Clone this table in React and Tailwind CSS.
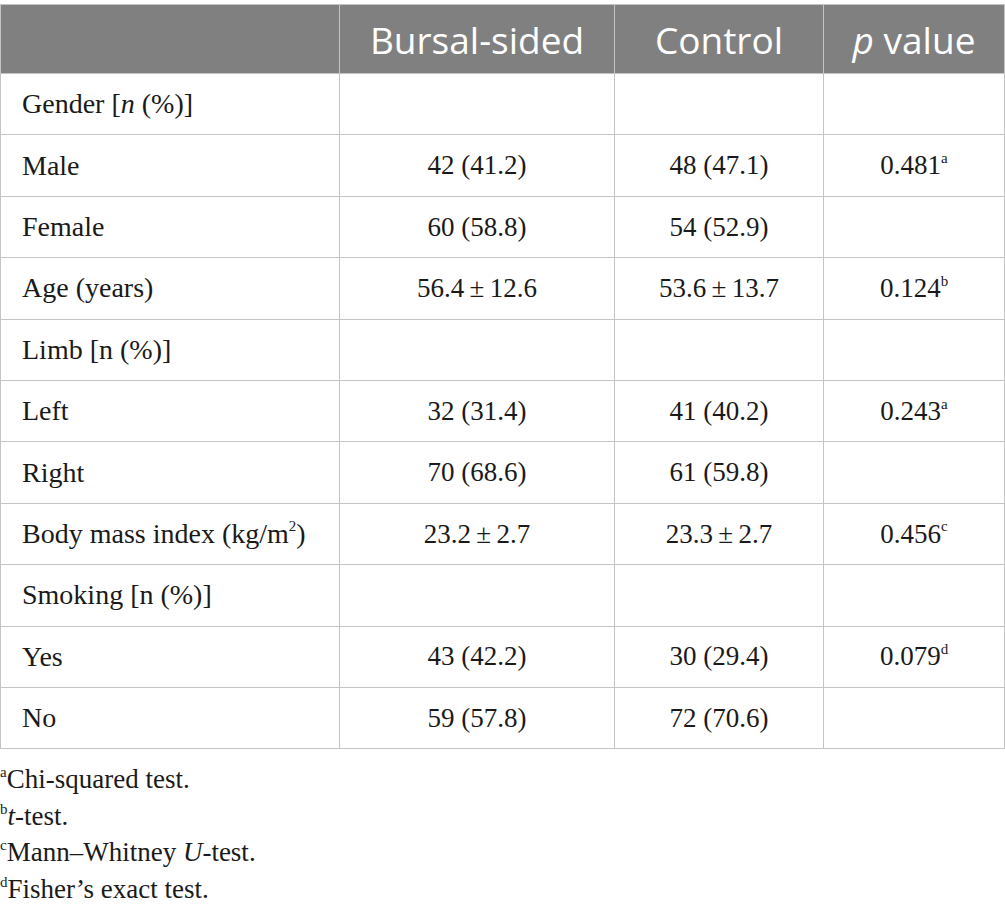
import React from 'react';

const serif = { fontFamily: '"Liberation Serif", "Times New Roman", serif' };

const rows = [
  { label: <>Gender [<i>n</i> (%)]</>, a: '', b: '', p: '' },
  { label: 'Male', a: '42 (41.2)', b: '48 (47.1)', p: '0.481', sup: 'a' },
  { label: 'Female', a: '60 (58.8)', b: '54 (52.9)', p: '' },
  { label: 'Age (years)', a: '56.4\u2009±\u200912.6', b: '53.6\u2009±\u200913.7', p: '0.124', sup: 'b' },
  { label: 'Limb [n (%)]', a: '', b: '', p: '' },
  { label: 'Left', a: '32 (31.4)', b: '41 (40.2)', p: '0.243', sup: 'a' },
  { label: 'Right', a: '70 (68.6)', b: '61 (59.8)', p: '' },
  { label: <>Body mass index (kg/m<sup className="text-[15px] -top-[0.8em]">2</sup>)</>, a: '23.2\u2009±\u20092.7', b: '23.3\u2009±\u20092.7', p: '0.456', sup: 'c' },
  { label: 'Smoking [n (%)]', a: '', b: '', p: '' },
  { label: 'Yes', a: '43 (42.2)', b: '30 (29.4)', p: '0.079', sup: 'd' },
  { label: 'No', a: '59 (57.8)', b: '72 (70.6)', p: '' },
];

const notes = [
  { s: 'a', t: 'Chi-squared test.' },
  { s: 'b', t: <><i>t</i>-test.</> },
  { s: 'c', t: <>Mann–Whitney <i>U</i>-test.</> },
  { s: 'd', t: 'Fisher’s exact test.' },
];

export default function App() {
  return (
    <div className="w-[1005px] bg-white pt-[4px]">
      <table className="border-collapse table-fixed w-[1004px] text-[#1a1a1a]" style={serif}>
        <colgroup>
          <col className="w-[339px]" />
          <col className="w-[275px]" />
          <col className="w-[209px]" />
          <col className="w-[181px]" />
        </colgroup>
        <thead>
          <tr className="bg-[#808080] h-[69px] text-white text-[37px] leading-none" style={{ fontFamily: '"Open Sans", sans-serif' }}>
            <th className="border border-[#c4c4c4]" />
            <th className="border border-[#c4c4c4] font-normal">Bursal-sided</th>
            <th className="border border-[#c4c4c4] font-normal">Control</th>
            <th className="border border-[#c4c4c4] font-normal"><i>p</i> value</th>
          </tr>
        </thead>
        <tbody className="text-[27px]">
          {rows.map((r, i) => (
            <tr key={i} className="h-[61.4px]">
              <td className="border border-[#c4c4c4] pl-[21px] text-[28px]">{r.label}</td>
              <td className="border border-[#c4c4c4] text-center">{r.a}</td>
              <td className="border border-[#c4c4c4] text-center">{r.b}</td>
              <td className="border border-[#c4c4c4] text-center">
                {r.p}
                {r.sup && <sup className="text-[15px] -top-[0.75em]">{r.sup}</sup>}
              </td>
            </tr>
          ))}
        </tbody>
      </table>
      <div className="pt-[12px] text-[27px] leading-[36.5px] text-[#1a1a1a]" style={serif}>
        {notes.map((n) => (
          <div key={n.s}>
            <sup className="text-[15px] -top-[0.75em]">{n.s}</sup>
            {n.t}
          </div>
        ))}
      </div>
    </div>
  );
}
